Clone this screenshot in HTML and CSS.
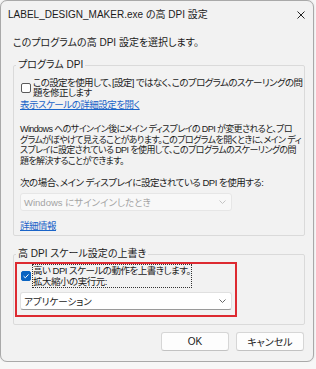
FILE: index.html
```html
<!DOCTYPE html>
<html>
<head>
    <title>LABEL_DESIGN_MAKER.exe の高 DPI 設定</title>
    <link rel="stylesheet" href="styles.css">
</head>
<body>
    <div class="window">
        <div class="titlebar">
            <span class="title">LABEL_DESIGN_MAKER.exe の高 DPI 設定</span>
            <svg class="close" width="8" height="8" viewBox="0 0 8 8">
                <path d="M0.5 0.5 L7.5 7.5 M7.5 0.5 L0.5 7.5" stroke="#222" stroke-width="1" fill="none"/>
            </svg>
        </div>

        <div class="content">
            <p class="intro">このプログラムの高 DPI 設定を選択します。</p>

            <!-- プログラム DPI -->
            <fieldset class="group">
                <legend>プログラム DPI</legend>
                <label class="check first">
                    <span class="box"></span>
                    <span class="check-text">この設定を使用して、[設定] ではなく、このプログラムのスケーリングの問<br>題を修正します</span>
                </label>
                <a class="link link-scale" href="#">表示スケールの詳細設定を開く</a>
                <p class="desc">Windows へのサインイン後にメイン ディスプレイの DPI が変更されると、プロ<br>グラムがぼやけて見えることがあります。このプログラムを開くときに、メイン ディ<br>スプレイに設定されている DPI を使用して、このプログラムのスケーリングの問<br>題を解決することができます。</p>
                <p class="when">次の場合、メイン ディスプレイに設定されている DPI を使用する:</p>
                <div class="combo disabled">
                    <span>Windows にサインインしたとき</span>
                    <svg width="7" height="4" viewBox="0 0 7 4"><path d="M0.5 0.5 L3.5 3.5 L6.5 0.5" stroke="#c4c4c4" fill="none"/></svg>
                </div>
                <a class="link link-info" href="#">詳細情報</a>
            </fieldset>

            <!-- 高 DPI スケール設定の上書き -->
            <fieldset class="group group-override">
                <legend>高 DPI スケール設定の上書き</legend>
                <div class="highlight">
                    <label class="check">
                        <span class="box checked">
                            <svg width="8" height="8" viewBox="0 0 8 8"><path d="M1.6 4.2 L3.3 5.8 L6.5 2.4" stroke="#fff" stroke-width="1" fill="none"/></svg>
                        </span>
                        <span class="check-text focus">高い DPI スケールの動作を上書きします。<br>拡大縮小の実行元:</span>
                    </label>
                    <div class="combo">
                        <span>アプリケーション</span>
                        <svg width="7" height="4" viewBox="0 0 7 4"><path d="M0.5 0.5 L3.5 3.5 L6.5 0.5" stroke="#666" fill="none"/></svg>
                    </div>
                </div>
            </fieldset>

            <div class="buttons">
                <button class="btn">OK</button>
                <button class="btn">キャンセル</button>
            </div>
        </div>
    </div>
</body>
</html>
```

FILE: styles.css
```css
body {
    margin: 0;
    background-color: #f7f7f7;
    font-family: "Liberation Sans", "Noto Sans CJK JP", sans-serif;
    font-size: 10px;
    font-feature-settings: "palt";
    color: #1b1b1b;
}
.window {
    width: 312px;
    border: 1px solid #a9a9a9;
    border-radius: 7px;
    background-color: #f2f2f2;
    box-shadow: 0 0 2px rgba(0,0,0,0.15);
}
.titlebar {
    height: 27px;
    display: flex;
    align-items: center;
    justify-content: space-between;
    padding: 0 8px 0 7px;
}
.title {
    line-height: 12px;
}
.content {
    padding: 0 8px 10px 12px;
}
p {
    margin: 0;
}
.intro {
    margin-top: 9px;
    line-height: 12px;
}
.group {
    margin: 10px 0 0;
    padding: 0 6px 4px;
    border: 1px solid #dadada;
    border-radius: 2px;
    min-width: 0;
    font-size: 9.5px;
    letter-spacing: -0.5px;
}
.group legend {
    margin-left: -4px;
    padding: 0 2px;
    line-height: 12px;
    font-size: 10px;
    letter-spacing: 0;
}
.group-override {
    margin-top: 12px;
    padding-bottom: 7px;
}
.check {
    display: flex;
    align-items: center;
    gap: 2px;
    line-height: 10px;
    white-space: nowrap;
}
.check.first {
    margin-top: 7px;
}
.check.first .check-text {
    letter-spacing: -0.6px;
}
.box {
    flex: none;
    width: 8px;
    height: 8px;
    margin-left: 1px;
    border: 1px solid #5a5a5a;
    border-radius: 2px;
    background: #fff;
    display: flex;
    align-items: center;
    justify-content: center;
}
.box.checked {
    background: #0a64c2;
    border-color: #0a64c2;
}
.link {
    display: block;
    color: #1a64c8;
    text-decoration: underline;
    line-height: 10px;
}
.link-scale {
    margin-top: 2px;
}
.desc {
    margin-top: 14px;
    line-height: 10.5px;
    font-size: 9px;
    letter-spacing: -0.6px;
    white-space: nowrap;
}
.when {
    margin-top: 12px;
    line-height: 10px;
    white-space: nowrap;
}
.combo {
    height: 16px;
    margin-top: 5px;
    width: 210px;
    padding: 0 5px 0 3px;
    display: flex;
    align-items: center;
    justify-content: space-between;
    background: #fff;
    border: 1px solid #e0e0e0;
    border-bottom-color: #9a9a9a;
    border-radius: 3px;
    box-sizing: content-box;
    letter-spacing: 0;
}
.combo.disabled {
    width: 202px;
    background: #f8f8f8;
    border-color: #e6e6e6;
    color: #a3a3a3;
}
.link-info {
    margin-top: 10px;
}
.highlight {
    margin: 2px 0 0 -5px;
    width: 212px;
    padding: 1px 3px 5px;
    border: 2px solid #dd2a31;
}
.highlight .combo {
    width: 202px;
}
.highlight .check {
    line-height: 11px;
}
.focus {
    outline: 1px dotted #333;
}
.buttons {
    display: flex;
    justify-content: flex-end;
    gap: 7px;
    margin: 7px 1px 0 0;
}
.btn {
    width: 68px;
    height: 19px;
    padding: 0;
    font: inherit;
    color: #1b1b1b;
    background: #fdfdfd;
    border: 1px solid #d6d6d6;
    border-bottom-color: #c2c2c2;
    border-radius: 3px;
}
```
